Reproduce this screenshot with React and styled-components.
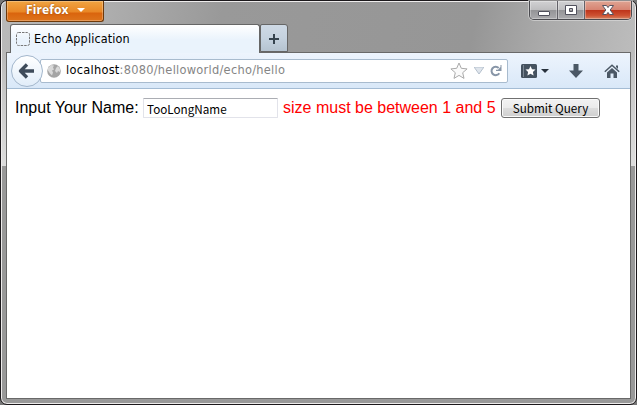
import React from "react";
import styled, { createGlobalStyle } from "styled-components";

const GlobalStyle = createGlobalStyle`
  * { box-sizing: border-box; }
  body { margin: 0; background: #777; overflow: hidden; }
  svg { display: block; flex: none; }
`;

const uiFont = `"DejaVu Sans Condensed", "DejaVu Sans", sans-serif`;

const Window = styled.div`
  display: flex;
  flex-direction: column;
  width: 637px;
  height: 405px;
  padding: 0 5px 5px;
  border: 1px solid #1b181b;
  border-radius: 7px;
  box-shadow: inset 0 0 0 1px #eeecec;
  background:
    linear-gradient(#999, #999) 0 165px / 100% 240px no-repeat,
    linear-gradient(180deg, transparent 51px, #d0d0d0aa 90px, #ddd 165px) 0 0 / 5px 165px no-repeat,
    linear-gradient(180deg, transparent 51px, #d0d0d0aa 90px, #ddd 165px) 100% 0 / 5px 165px no-repeat,
    linear-gradient(100deg, #bababa 0, #adadad 110px, #999 220px, #969696 470px, #aaa 540px, #bdbdbd 637px);
`;

const TitleBar = styled.div`
  display: flex;
  justify-content: space-between;
  height: 23px;
  flex: none;
`;

const FirefoxButton = styled.button`
  display: flex;
  align-items: center;
  gap: 8px;
  width: 98px;
  height: 21px;
  margin: 0;
  padding: 0 0 3px 19px;
  border: 1px solid #6e3909;
  border-top: 0;
  border-radius: 0 0 3px 3px;
  box-shadow: inset 0 0 0 1px #ffffff45;
  background: linear-gradient(#efa442, #e98726 55%, #da640d 60%, #dd741c);
  color: #fff;
  font: bold 12px/17px "Noto Sans", sans-serif;
  letter-spacing: 0.2px;
  text-shadow: 0 0 2px #8c4000;
`;

const WindowControls = styled.div`
  display: flex;
  width: 103px;
  height: 19px;
  margin-right: -1px;
  border: 1px solid #4b4b50;
  border-top: 0;
  border-radius: 0 0 5px 5px;
  box-shadow: 0 0 0 1px #ddd9;
  overflow: hidden;
`;

const ControlButton = styled.button`
  display: flex;
  align-items: center;
  justify-content: center;
  width: ${(p) => p.$width}px;
  height: 18px;
  margin: 0;
  padding: 0;
  border: 0;
  border-right: ${(p) => (p.$close ? "0" : "1px solid #626168")};
  box-shadow: inset 0 0 0 1px #ffffff50;
  background: ${(p) =>
    p.$close
      ? "linear-gradient(#dfa493, #d78472 48%, #be351b 52%, #ce5132 80%, #d58462)"
      : "linear-gradient(#d1d1d3, #bebec0 48%, #949497 52%, #aaaaad)"};
`;

const TabStrip = styled.div`
  display: flex;
  height: 28px;
  flex: none;
  padding-left: 4px;
`;

const Tab = styled.div`
  display: flex;
  gap: 4px;
  width: 250px;
  height: 28px;
  padding: 7px 0 0 5px;
  border: 1px solid #666;
  border-bottom: 0;
  border-radius: 3px 3px 0 0;
  background: linear-gradient(#fff, #eaf3fc 55%, #eaf3fc);
`;

const TabTitle = styled.span`
  margin-top: -1px;
  font: 12.5px/15px ${uiFont};
  letter-spacing: 0.13px;
  color: #000;
  white-space: nowrap;
`;

const NewTab = styled.button`
  display: flex;
  align-items: center;
  justify-content: center;
  width: 28px;
  height: 28px;
  margin: 0;
  padding: 2px 0 0;
  border: 1px solid #666;
  border-radius: 2px 3px 0 0;
  background: linear-gradient(#ced9e5, #c5d2df 50%, #b5c3d0);
`;

const Client = styled.div`
  display: flex;
  flex-direction: column;
  flex: 1;
  border: 1px solid #696969;
  background: #fff;
`;

const NavBar = styled.div`
  display: flex;
  align-items: center;
  height: 36px;
  flex: none;
  padding-left: 4px;
  border-bottom: 1px solid #a4bcd4;
  background: linear-gradient(#edf4fd, #d9e8f8);
`;

/* Covers the toolbar border beneath the selected tab. */
const TabJoin = styled.div`
  width: 248px;
  height: 1px;
  flex: none;
  margin: -1px 0 0 4px;
  position: relative;
  background: #eaf3fc;
`;

const BackButton = styled.button`
  display: flex;
  align-items: center;
  justify-content: center;
  width: 32px;
  height: 32px;
  flex: none;
  position: relative;
  z-index: 1;
  margin: 0 -3px 0 0;
  padding: 0;
  border: 1px solid #a3b7cc;
  border-radius: 50%;
  background: linear-gradient(#fff, #e1edf9);
`;

const AddressBar = styled.div`
  display: flex;
  align-items: center;
  width: 468px;
  height: 24px;
  flex: none;
  padding: 0 5px 0 6px;
  border: 1px solid #a8bbce;
  border-radius: 2px;
  background: #fff;
`;

const Address = styled.span`
  flex: 1;
  margin: -1px 0 0 5px;
  font: 12.7px/16px ${uiFont};
  letter-spacing: 0.26px;
  color: #858585;
  white-space: nowrap;
`;

const Host = styled.span`
  color: #000;
`;

const AddressActions = styled.div`
  display: flex;
  align-items: center;
  gap: 6px;
`;

const Tools = styled.div`
  display: flex;
  align-items: center;
  margin-left: 13px;
`;

const ToolButton = styled.button`
  display: flex;
  align-items: center;
  gap: 4px;
  margin: 0 ${(p) => p.$gap || 0}px 0 0;
  padding: 0;
  border: 0;
  background: none;
`;

const Form = styled.form`
  display: flex;
  align-items: flex-start;
  padding: 9px 0 0 8px;
  margin: 0;
`;

const FormText = styled.label`
  width: ${(p) => p.$width}px;
  flex: none;
  padding-top: 1px;
  font: 16px/18px "Liberation Sans", Arial, sans-serif;
  color: ${(p) => (p.$error ? "#f00" : "#000")};
  white-space: nowrap;
`;

const NameInput = styled.input`
  width: 135px;
  height: 20px;
  margin: 0 5px 0 0;
  padding: 0 3px;
  border: 1px solid #e2e3ea;
  border-top-color: #abadb3;
  border-radius: 1px;
  outline: 0;
  background: #fff;
  color: #000;
  font: 11.7px/18px "Noto Sans CJK JP", sans-serif;
`;

const SubmitButton = styled.button`
  width: 99px;
  height: 20px;
  margin: 0;
  padding: 0;
  border: 1px solid #707070;
  border-radius: 3px;
  box-shadow: inset 0 0 0 1px #fafafa;
  background: linear-gradient(#f2f2f2, #ebebeb 49%, #dddddd 50%, #cfcfcf);
  color: #000;
  font: 11.7px/18px "Noto Sans CJK JP", sans-serif;
  white-space: nowrap;
`;

const Triangle = ({ w = 8, h = 4, fill = "#27313c", stroke }) => (
  <svg width={w} height={h} viewBox={`0 0 ${w} ${h}`}>
    <path d={`M0 0H${w}L${w / 2} ${h}Z`} fill={fill} stroke={stroke} />
  </svg>
);

const Minimize = () => (
  <svg width="14" height="14">
    <rect x="1.5" y="8.5" width="11" height="4" rx=".5" fill="#fff" stroke="#51515d" />
  </svg>
);

const Maximize = () => (
  <svg width="14" height="14">
    <path d="M1.5 2.5h11v9h-11zM5.5 5.5v3h3v-3z" fill="#fff" fillRule="evenodd" stroke="#51515d" />
  </svg>
);

const Close = () => (
  <svg width="14" height="14">
    <path d="M1.5 2.5h4L7 4.6l1.5-2.1h4L9.2 7l3.3 4.5h-4L7 9.4l-1.5 2.1h-4L4.8 7z" fill="#fff" stroke="#56525f" />
  </svg>
);

const PageIcon = () => (
  <svg width="14" height="14">
    <rect x=".5" y=".5" width="13" height="13" rx="2" fill="none" stroke="#777" strokeDasharray="2.5 1" />
  </svg>
);

const Plus = () => (
  <svg width="12" height="12">
    <path d="M5 1h2v4h4v2H7v4H5V7H1V5h4z" fill="#35434e" />
  </svg>
);

const BackArrow = () => (
  <svg width="18" height="18">
    <path d="M9 2.5 2.5 9 9 15.5M3 9h13" fill="none" stroke="#3e4b5a" strokeWidth="3.4" strokeLinejoin="round" />
  </svg>
);

const Globe = () => (
  <svg width="14" height="14">
    <circle cx="7" cy="7" r="6.8" fill="#a5a5a5" />
    <path d="M1 4l3-3 3 .5-1 2 1 2-2 1 1 2-1 3-2-2-2-3zM9 4l2-2 2 3v3l-2-1-1 2-2-2z" fill="#d9d9d9" />
  </svg>
);

const Star = () => (
  <svg width="18" height="18">
    <path d="M9 1l2.3 5.3 5.8.6-4.4 3.8 1.3 5.7-5-3-5 3 1.3-5.7L.9 6.9l5.8-.6z" fill="#fafafa" stroke="#aaa" />
  </svg>
);

const Reload = () => (
  <svg width="12" height="12">
    <path d="M9.3 8.2A4.2 4.2 0 1 1 8.7 3" fill="none" stroke="#8795a7" strokeWidth="2" />
    <path d="M11.5 0v6H6V4.8h2L10.5 2V0z" fill="#8795a7" />
  </svg>
);

const Bookmarks = () => (
  <svg width="16" height="14">
    <rect width="16" height="14" rx="1.5" fill="#45525f" />
    <path d="M2.5 1v12" stroke="#7b8793" />
    <path d="M9.5 2l1.5 3.2 3.5.4-2.6 2.4.7 3.6-3.1-1.8-3.1 1.8.7-3.6-2.6-2.4 3.5-.4z" fill="#fff" />
  </svg>
);

const Download = () => (
  <svg width="14" height="14">
    <path d="M4.5 0h5v6.5H14L7 14 0 6.5h4.5z" fill="#4b5865" />
  </svg>
);

const Home = () => (
  <svg width="16" height="14">
    <path d="M.8 7.7 8 1.2l7.2 6.5" fill="none" stroke="#4b5865" strokeWidth="1.5" />
    <path d="M3 8.5 8 4.1l5 4.4V14H9.5V9.5h-3V14H3zM12 1.5h2V5l-2-2z" fill="#4b5865" />
  </svg>
);

export default function App() {
  return (
    <>
      <GlobalStyle />
      <Window>
        <TitleBar>
          <FirefoxButton>Firefox <Triangle fill="#fff" /></FirefoxButton>
          <WindowControls>
            <ControlButton $width={28} aria-label="Minimize"><Minimize /></ControlButton>
            <ControlButton $width={27} aria-label="Maximize"><Maximize /></ControlButton>
            <ControlButton $width={46} $close aria-label="Close"><Close /></ControlButton>
          </WindowControls>
        </TitleBar>
        <TabStrip>
          <Tab><PageIcon /><TabTitle>Echo Application</TabTitle></Tab>
          <NewTab aria-label="New tab"><Plus /></NewTab>
        </TabStrip>
        <Client>
          <TabJoin />
          <NavBar>
            <BackButton aria-label="Back"><BackArrow /></BackButton>
            <AddressBar>
              <Globe />
              <Address><Host>localhost</Host>:8080/helloworld/echo/hello</Address>
              <AddressActions>
                <Star />
                <Triangle w={10} h={7} fill="#dfe5ec" stroke="#b5c1cd" />
                <Reload />
              </AddressActions>
            </AddressBar>
            <Tools>
              <ToolButton $gap={20} aria-label="Bookmarks"><Bookmarks /><Triangle /></ToolButton>
              <ToolButton $gap={21} aria-label="Downloads"><Download /></ToolButton>
              <ToolButton aria-label="Home"><Home /></ToolButton>
            </Tools>
          </NavBar>
          <Form>
            <FormText $width={128} htmlFor="name">Input Your Name:</FormText>
            <NameInput id="name" defaultValue="TooLongName" />
            <FormText as="span" $width={218} $error>size must be between 1 and 5</FormText>
            <SubmitButton type="button">Submit Query</SubmitButton>
          </Form>
        </Client>
      </Window>
    </>
  );
}
